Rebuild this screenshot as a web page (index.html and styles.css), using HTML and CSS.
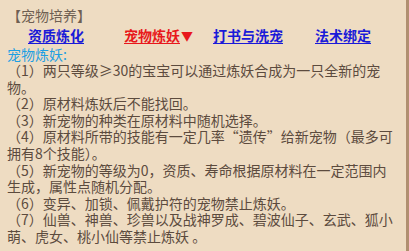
FILE: index.html
```html
<!DOCTYPE html>
<html lang="zh">
<head>
<meta charset="utf-8">
<link rel="stylesheet" href="styles.css">
</head>
<body>
<div class="panel">
  <div class="title">【宠物培养】</div>
  <div class="tabs">
    <a class="tab" href="#">资质炼化</a>
    <span class="tab active"><a href="#">宠物炼妖</a><span class="arrow">▼</span></span>
    <a class="tab" href="#">打书与洗宠</a>
    <a class="tab" href="#">法术绑定</a>
  </div>
  <div class="heading">宠物炼妖:</div>
  <div class="body">
    <p>（1）两只等级≥30的宝宝可以通过炼妖合成为一只全新的宠物。</p>
    <p>（2）原材料炼妖后不能找回。</p>
    <p>（3）新宠物的种类在原材料中随机选择。</p>
    <p>（4）原材料所带的技能有一定几率“遗传”给新宠物（最多可拥有8个技能）。</p>
    <p>（5）新宠物的等级为0，资质、寿命根据原材料在一定范围内生成，属性点随机分配。</p>
    <p>（6）变异、加锁、佩戴护符的宠物禁止炼妖。</p>
    <p>（7）仙兽、神兽、珍兽以及战神罗成、碧波仙子、玄武、狐小萌、虎女、桃小仙等禁止炼妖 。</p>
  </div>
</div>
</body>
</html>
```

FILE: styles.css
```css
html, body {
  margin: 0;
  padding: 0;
  width: 409px;
  height: 251px;
  overflow: hidden;
}
body {
  background: #eedcc2;
  font-family: "Noto Sans CJK SC", "Noto Sans", sans-serif;
  font-size: 14px;
  color: #5c4b3e;
  font-kerning: none;
}
.panel {
  box-sizing: border-box;
  width: 409px;
  height: 251px;
  border-right: 3px solid #b08f70;
  padding: 6px 8px 0 7px;
}
.title {
  color: #6e5f52;
  line-height: 18px;
}
.tabs {
  display: grid;
  grid-template-columns: 96px 89px 102px auto;
  padding-left: 21px;
  line-height: 20px;
  margin-top: 1px;
}
.tab, .tab a {
  color: #1a1ad8;
  font-weight: 600;
  text-decoration: underline;
  text-underline-offset: 2px;
}
.tab.active a {
  color: #e8181c;
}
.tab.active {
  text-decoration: none;
}
.arrow {
  color: #e8181c;
  font-size: 12px;
  margin-left: 1px;
}
.heading {
  color: #1e9fe3;
  line-height: 16px;
}
.body p {
  margin: 0;
  line-height: 16.6px;
}
```
